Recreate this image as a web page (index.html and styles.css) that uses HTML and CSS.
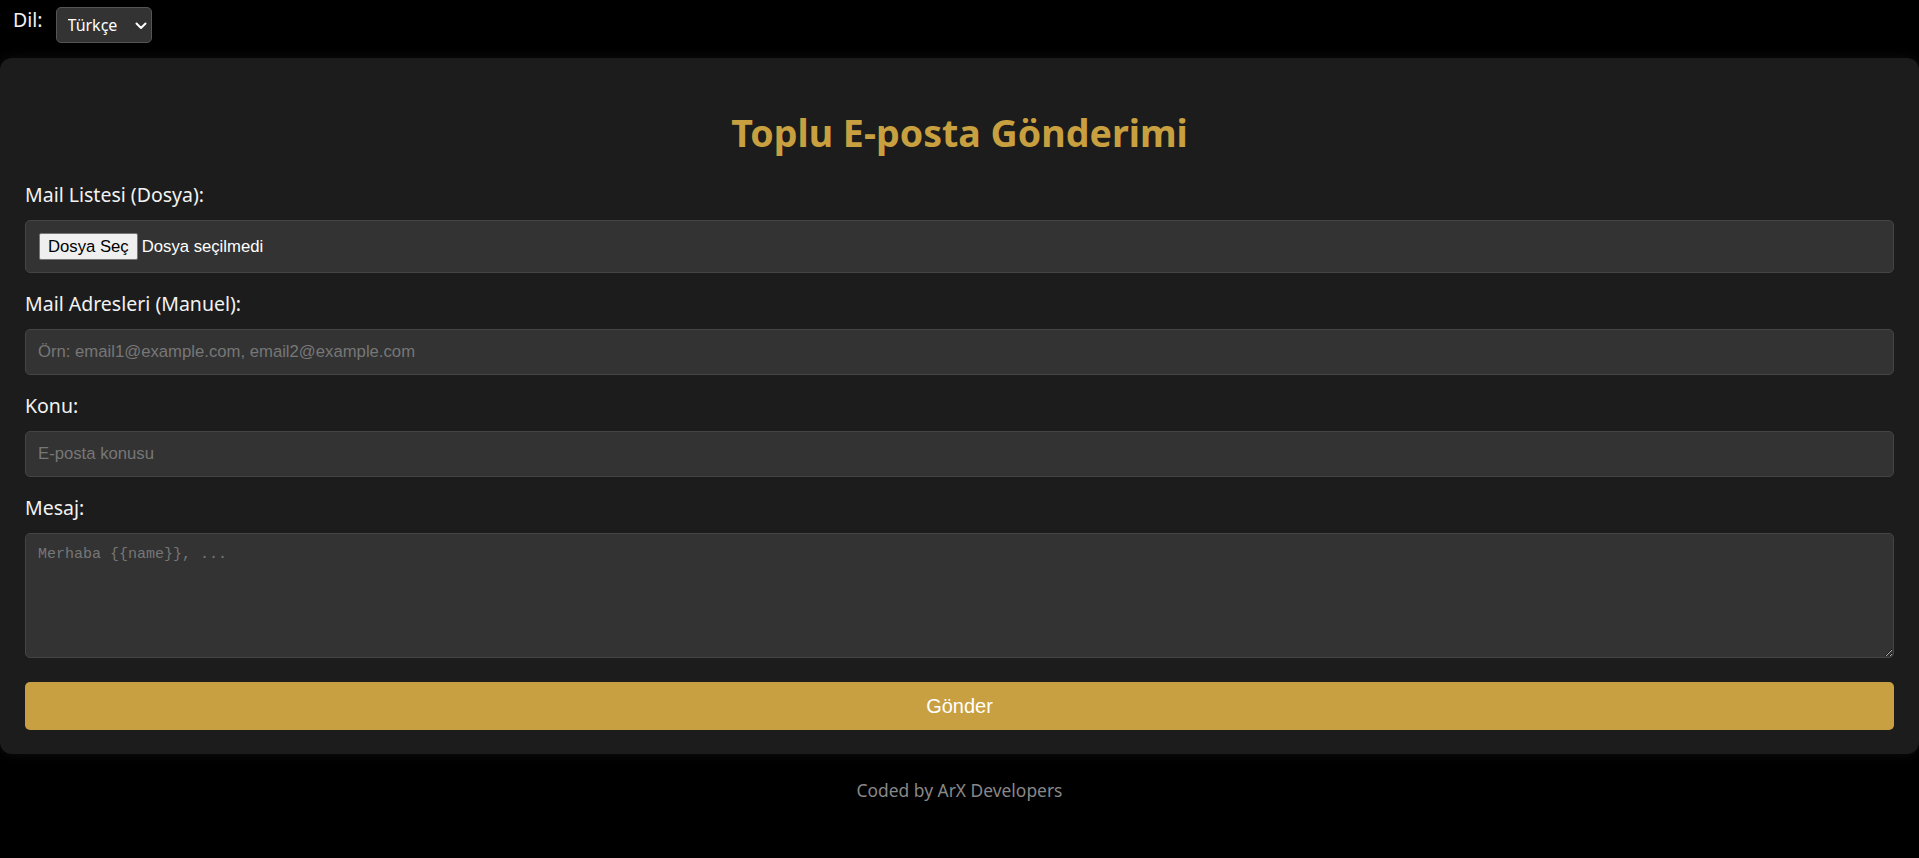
FILE: index.html
```html
<!DOCTYPE html>
<html lang="tr">
<head>
    <meta charset="UTF-8">
    <meta name="viewport" content="width=device-width, initial-scale=1.0">
    <title>Toplu E-posta Gönderimi</title>
    <link rel="stylesheet" href="styles.css">
</head>
<body>
    <header class="lang-bar">
        <label for="lang" class="lang-label">Dil:</label>
        <div class="select-wrap">
            <select id="lang" class="lang-select">
                <option>Türkçe</option>
                <option>English</option>
            </select>
            <svg class="select-arrow" width="12" height="8" viewBox="0 0 12 8">
                <path d="M1.5 1.5 L6 6 L10.5 1.5" fill="none" stroke="#fff" stroke-width="2" stroke-linecap="round" stroke-linejoin="round"/>
            </svg>
        </div>
    </header>

    <main class="card">
        <h1 class="title">Toplu E-posta Gönderimi</h1>

        <form class="mail-form">
            <!-- File list -->
            <label class="field-label" for="mailFile">Mail Listesi (Dosya):</label>
            <div class="file-box">
                <input type="file" id="mailFile" class="file-hidden">
                <label for="mailFile" class="file-button">Dosya Seç</label>
                <span class="file-name">Dosya seçilmedi</span>
            </div>

            <!-- Manual addresses -->
            <label class="field-label" for="manual">Mail Adresleri (Manuel):</label>
            <input type="text" id="manual" class="text-input" placeholder="Örn: email1@example.com, email2@example.com">

            <label class="field-label" for="subject">Konu:</label>
            <input type="text" id="subject" class="text-input" placeholder="E-posta konusu">

            <label class="field-label" for="message">Mesaj:</label>
            <textarea id="message" class="text-area" placeholder="Merhaba {{name}}, ..."></textarea>

            <button type="submit" class="send-button">Gönder</button>
        </form>
    </main>

    <footer class="footer">
        <p>Coded by ArX Developers</p>
    </footer>
</body>
</html>
```

FILE: styles.css
```css
/* Global styles */
body {
    margin: 0;
    padding: 0;
    background-color: #000;
    color: #f2f2f2;
    font-family: "Noto Sans", "Open Sans", sans-serif;
}

/* Language bar */
.lang-bar {
    display: flex;
    align-items: flex-start;
    padding: 7px 13px 15px;
}

.lang-label {
    font-size: 19.5px;
    line-height: 23px;
    margin-top: 1px;
    margin-right: 13px;
}

.select-wrap {
    position: relative;
}

.lang-select {
    appearance: none;
    -webkit-appearance: none;
    width: 96px;
    height: 36px;
    padding: 0 0 0 11px;
    background-color: #333;
    color: #fff;
    border: 1px solid #555;
    border-radius: 5px;
    font-family: "Noto Sans", sans-serif;
    font-size: 16px;
}

.select-arrow {
    position: absolute;
    left: 79px;
    top: 15px;
    pointer-events: none;
}

/* Card */
.card {
    background-color: #1c1c1c;
    border-radius: 12px;
    padding: 25px 25px 24px;
    box-shadow: 0 0 14px rgba(255, 255, 255, 0.06);
}

.title {
    margin: 28px 0 28px;
    text-align: center;
    color: #c9a03f;
    font-size: 37.6px;
    line-height: 44px;
    font-weight: bold;
}

.mail-form {
    display: flex;
    flex-direction: column;
}

.field-label {
    display: block;
    font-size: 19.5px;
    line-height: 23px;
    margin-bottom: 14px;
    color: #f2f2f2;
}

/* Fake file input */
.file-box {
    display: flex;
    align-items: center;
    box-sizing: border-box;
    height: 53px;
    padding: 0 13px;
    margin-bottom: 19px;
    background-color: #333;
    border: 1px solid #444;
    border-radius: 5px;
    font-family: "Liberation Sans", Arial, sans-serif;
    font-size: 16.7px;
}

.file-hidden {
    display: none;
}

.file-button {
    box-sizing: border-box;
    height: 27px;
    line-height: 25px;
    padding: 0 8px;
    margin-right: 4px;
    background-color: #efefef;
    color: #000;
    border: 1px solid #767676;
    border-radius: 2px;
}

.file-name {
    color: #fff;
}

.text-input,
.text-area {
    box-sizing: border-box;
    width: 100%;
    padding: 12px;
    background-color: #333;
    color: #fff;
    border: 1px solid #444;
    border-radius: 5px;
    font-family: "Liberation Sans", Arial, sans-serif;
    font-size: 16.7px;
}

.text-input {
    height: 46px;
    margin-bottom: 19px;
}

.text-area {
    display: block;
    height: 125px;
    margin-bottom: 24px;
    font-family: "Liberation Mono", monospace;
    font-size: 15px;
}

.text-input::placeholder,
.text-area::placeholder {
    color: #777;
}

.send-button {
    height: 48px;
    background-color: #c8a041;
    color: #fff;
    border: none;
    border-radius: 5px;
    font-family: "Liberation Sans", Arial, sans-serif;
    font-size: 20px;
    cursor: pointer;
}

.send-button:hover {
    background-color: #b8913a;
}

/* Footer */
.footer {
    text-align: center;
    margin-top: 24px;
}

.footer p {
    margin: 0;
    color: #888;
    font-size: 17.4px;
    line-height: 24px;
}
```
